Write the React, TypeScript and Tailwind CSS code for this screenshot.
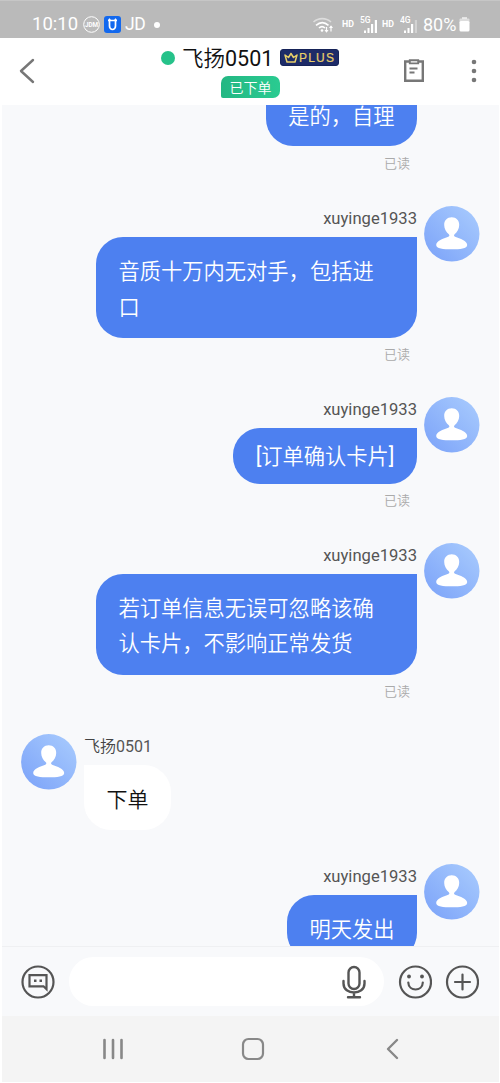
import type { ReactNode } from 'react';

function Avatar() {
  return (
    <svg viewBox="0 0 56 56" className="h-14 w-14 shrink-0">
      <defs>
        <linearGradient id="avatar" x1="0" y1="1" x2="1" y2="0">
          <stop offset="0.1" stopColor="#7fa6f9" />
          <stop offset="0.9" stopColor="#a5c8fd" />
        </linearGradient>
      </defs>
      <circle cx="27.8" cy="27.8" r="27.7" fill="url(#avatar)" />
      <path
        fill="#fff"
        d="M27.7 11.3c4.6 0 7.5 3.2 7.5 7.7 0 4-2 7-4.6 9.2-.9.9-.7 2 .5 2.5 5 1.7 12.1 4 12.1 8.2 0 3.6-7 4.3-15.5 4.3s-15.5-.7-15.5-4.3c0-4.2 7.1-6.5 12.1-8.2 1.2-.5 1.4-1.6.5-2.5-2.6-2.2-4.6-5.2-4.6-9.2 0-4.5 2.9-7.7 7.5-7.7z"
      />
    </svg>
  );
}

function Sent({ children, compact = false, read = true }: { children: ReactNode; compact?: boolean; read?: boolean }) {
  return (
    <div className="flex justify-end gap-[7px] pr-[19px] pb-[26px]">
      <div className="flex flex-col items-end">
        <div className="h-[31px] text-[16.6px] leading-[25px] text-[#555]">xuyinge1933</div>
        <div
          className={`max-w-[321px] rounded-[27px] rounded-tr-none bg-[#4d80f0] px-[22.5px] text-[21.28px] leading-[35.5px] font-[350] text-white ${
            compact ? 'pt-[11px] pb-[9px]' : 'pt-[17px] pb-[13px]'
          }`}
        >
          {children}
        </div>
        {read && <div className="pr-[7px] text-[13px] leading-[33px] font-[350] text-[#aaa]">已读</div>}
      </div>
      <Avatar />
    </div>
  );
}

function Signal({ label, faded }: { label: string; faded: boolean }) {
  return (
    <svg viewBox="0 0 20 18" className="h-[18px] w-5" fill="#fff">
      <text x="0" y="7" fontSize="8.5" fontWeight="500" fontFamily="Roboto, sans-serif">{label}</text>
      <rect x="4" y="14.5" width="2" height="2.5" />
      <rect x="7.5" y="12" width="2" height="5" />
      <rect x="11" y="8" width="2.2" height="9" />
      <rect x="14.8" y="4" width="2.2" height="13" opacity={faded ? 0.35 : 1} />
    </svg>
  );
}

export default function App() {
  return (
    <div className="flex h-[1083px] w-[500px] flex-col overflow-hidden bg-white font-['Roboto','Noto_Sans_CJK_SC',sans-serif]">
      {/* Status bar */}
      <div className="flex h-[38px] shrink-0 items-center border-t border-[#c6c6c6] bg-[#bababa] pt-2.5 pl-8 text-white">
        <span className="w-[51px] text-[18.5px]">10:10</span>
        <svg viewBox="0 0 17 17" className="h-[17px] w-[17px]">
          <circle cx="8.5" cy="8.5" r="7.8" fill="none" stroke="#fff" />
          <text x="8.5" y="10.8" fontSize="6.3" fontWeight="700" textAnchor="middle" fontFamily="Roboto" fill="#fff">JDM</text>
        </svg>
        <svg viewBox="0 0 17 17" className="ml-1 h-[17px] w-[17px]">
          <rect width="17" height="17" rx="3" fill="#1268ee" />
          <path d="M4 4.5h9M5.5 5v5a3 3.5 0 0 0 6 0V5M5 2.8l1.5 2M12 2.8l-1.5 2" fill="none" stroke="#fff" strokeWidth="1.7" />
        </svg>
        <span className="ml-1 w-[29px] text-[17.5px] tracking-[-0.5px]">JD</span>
        <span className="h-1.5 w-1.5 rounded-full bg-white" />
        <svg viewBox="0 0 22 18" className="ml-[152px] h-[18px] w-[22px]" fill="none" stroke="#fff" strokeWidth="1.6">
          <path d="M1.5 6c5-4.5 12.5-4.5 17.5 0" opacity="0.5" />
          <path d="M4 9.3c4-3.5 8.5-3.5 12.5 0M7 12c2-1.800 4-1.800 6 0" />
          <circle cx="10" cy="14.5" r="1.3" fill="#fff" stroke="none" />
          <path d="M14.5 11v5M19 15.5v-5" strokeWidth="1.2" />
          <path d="m12.5 14 2 2.8 2-2.8zM17 12l2-2.8 2 2.8z" fill="#fff" stroke="none" />
        </svg>
        <span className="ml-2 w-[18px] text-[8.8px] font-bold">HD</span>
        <Signal label="5G" faded={false} />
        <span className="ml-[2px] w-[18px] text-[8.8px] font-bold">HD</span>
        <Signal label="4G" faded />
        <span className="ml-[3px] w-[36px] text-[18px]">80%</span>
        <svg viewBox="0 0 11 15" className="h-[15px] w-[11px]" fill="#fff">
          <path d="M3 0h5v2H3z" opacity="0.6" />
          <rect x="0.5" y="1.5" width="10" height="5" rx="1" opacity="0.5" />
          <rect x="0.5" y="4" width="10" height="10.5" rx="1.5" />
        </svg>
      </div>

      {/* Header */}
      <div className="flex h-[67px] shrink-0 items-start bg-white">
        <svg viewBox="0 0 16 26" className="mt-5 ml-[19px] h-[26px] w-4" fill="none" stroke="#777" strokeWidth="2.4" strokeLinecap="round" strokeLinejoin="round">
          <path d="M14 2 2 13l12 11" />
        </svg>
        <div className="ml-[126px] w-[179px]">
          <div className="flex h-[38px] items-center">
            <span className="mt-[2px] h-3.5 w-3.5 rounded-full bg-[#26c28a]" />
            <span className="mt-[5px] ml-[7px] w-[98px] text-[21.5px] font-[350] whitespace-nowrap text-[#111]">
              飞扬<span className="font-normal">0501</span>
            </span>
            <span className="mt-px flex h-[17px] w-[59px] items-center gap-px rounded-[3px] border border-[#162358] bg-[#1d2b68] pl-[3px] text-[#e8cf69]">
              <svg viewBox="0 0 14 11" className="h-[11px] w-3.5" fill="none" stroke="currentColor" strokeWidth="1.5" strokeLinejoin="round">
                <path d="m1 3 2 7h8l2-7-3.5 2.5L7 1.5 4.5 5.5z" />
              </svg>
              <span className="font-['Liberation_Sans'] text-[12px] tracking-[1.2px] [-webkit-text-stroke:0.2px]">PLUS</span>
            </span>
          </div>
          <div className="ml-[60px] flex h-[22px] w-[59px] items-center justify-center rounded-[7px] rounded-bl-[2px] bg-gradient-to-r from-[#24b783] to-[#2acb91] pt-[2px] text-[14px] font-[350] text-white">
            已下单
          </div>
        </div>
        <svg viewBox="0 0 22 26" className="mt-5 ml-[63px] h-[26px] w-[22px]" fill="none" stroke="#777" strokeWidth="2.4">
          <path d="M6 3.5H2.2v19.3h17.6V3.5H16" />
          <path d="M6.8 2.2h8.4v3.2H6.8zM6.5 10.5h8M6.5 14.5h5" strokeWidth="1.9" />
        </svg>
        <svg viewBox="0 0 6 24" className="mt-[21px] ml-[46px] h-6 w-1.5" fill="#777">
          <circle cx="3" cy="3" r="2.3" />
          <circle cx="3" cy="12" r="2.3" />
          <circle cx="3" cy="21" r="2.3" />
        </svg>
      </div>

      {/* Messages */}
      <div className="mr-px ml-[2px] flex h-[841px] shrink-0 flex-col overflow-hidden bg-[#f8f9fb]">
        <div className="flex h-[101px] shrink-0 flex-col items-end pr-[82px]">
          <div className="h-[41px] rounded-b-[27px] bg-[#4d80f0] px-[22.5px] text-[21.28px] leading-[23px] font-[350] text-white">
            是的，自理
          </div>
          <div className="pr-[7px] text-[13px] leading-[35px] font-[350] text-[#aaa]">已读</div>
        </div>

        <Sent>音质十万内无对手，包括进口</Sent>
        <Sent compact>
          <span className="font-normal">[</span>订单确认卡片<span className="font-normal">]</span>
        </Sent>
        <Sent>若订单信息无误可忽略该确认卡片，不影响正常发货</Sent>

        <div className="flex gap-[7px] pb-[34px] pl-[19px]">
          <Avatar />
          <div className="flex flex-col items-start">
            <div className="h-[31px] text-[16px] leading-[26px] font-[350] text-[#444]">
              飞扬<span className="font-normal text-[#555]">0501</span>
            </div>
            <div className="rounded-[27px] rounded-tl-none bg-white px-[22.5px] pt-[18px] pb-3 text-[21px] leading-[35px] font-[350] text-[#111]">
              下单
            </div>
          </div>
        </div>

        <Sent read={false}>明天发出</Sent>
      </div>

      {/* Input bar */}
      <div className="mr-px ml-[2px] flex h-[70px] shrink-0 items-center border-t border-[#eff0f2] bg-[#f8f9fb] pl-[19px]">
        <svg viewBox="0 0 34 34" className="h-[34px] w-[34px]" fill="none" stroke="#555" strokeWidth="2.2">
          <circle cx="17" cy="17" r="15.5" />
          <path d="M8.5 10.2h17v14l-3-2.9h-14z" />
          <path d="M13 15.8h2.5M18.5 15.8H21" strokeWidth="2.5" />
        </svg>
        <div className="ml-[14px] flex h-[49px] w-[315px] items-center justify-end rounded-full bg-white pr-[17px]">
          <svg viewBox="0 0 26 34" className="h-[34px] w-[26px]" fill="none" stroke="#555" strokeWidth="2.4" strokeLinecap="round">
            <rect x="7.5" y="2" width="11" height="22" rx="5.5" />
            <path d="M2.5 16v2.5c0 12 21 12 21 0V16M13 27.5V32M7 32.2h12" />
          </svg>
        </div>
        <svg viewBox="0 0 34 34" className="ml-[14px] h-[34px] w-[34px]" fill="none" stroke="#555" strokeWidth="2.2" strokeLinecap="round">
          <circle cx="17.5" cy="17" r="15.5" />
          <path d="M10.3 17.5c.3 9.3 14.2 9.3 14.5 0" />
          <circle cx="11" cy="11.5" r="1.9" fill="#555" stroke="none" />
          <circle cx="24" cy="11.5" r="1.9" fill="#555" stroke="none" />
        </svg>
        <svg viewBox="0 0 34 34" className="ml-[13px] h-[34px] w-[34px]" fill="none" stroke="#555" strokeWidth="2.2" strokeLinecap="round">
          <circle cx="17.5" cy="17" r="15.5" />
          <path d="M17.5 9.5v15M10 17h15" />
        </svg>
      </div>

      {/* System navigation */}
      <div className="mr-px mb-px ml-[2px] flex flex-1 items-center bg-[#f4f4f4] pl-[100px]">
        <svg viewBox="0 0 22 22" className="h-[22px] w-[22px]" fill="none" stroke="#888" strokeWidth="2.6" strokeLinecap="round">
          <path d="M2.5 2v18M11 2v18M19.5 2v18" />
        </svg>
        <svg viewBox="0 0 24 24" className="ml-[117px] h-6 w-6" fill="none" stroke="#888" strokeWidth="2.2">
          <rect x="2" y="2" width="20" height="20" rx="5.5" />
        </svg>
        <svg viewBox="0 0 14 22" className="ml-[120px] h-[22px] w-3.5" fill="none" stroke="#888" strokeWidth="2.4" strokeLinecap="round" strokeLinejoin="round">
          <path d="M12 2 3 11l9 9" />
        </svg>
      </div>
    </div>
  );
}
